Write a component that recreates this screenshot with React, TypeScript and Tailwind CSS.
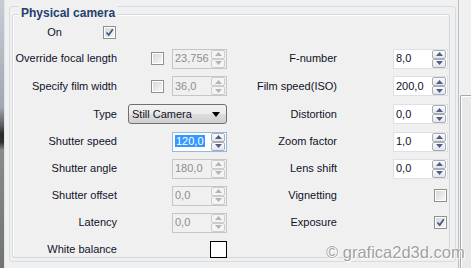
import React from "react";

const FONT = "font-['Liberation_Sans',Arial,sans-serif]";

function Tri({ up, color }: { up: boolean; color: string }) {
  return (
    <svg width="7" height="4" viewBox="0 0 7 4" className="block">
      {up ? (
        <polygon points="0,4 7,4 3.5,0" fill={color} />
      ) : (
        <polygon points="0,0 7,0 3.5,4" fill={color} />
      )}
    </svg>
  );
}

function SpinBtn({ up, disabled }: { up: boolean; disabled?: boolean }) {
  return (
    <div
      className={
        "h-[9px] w-[14px] flex items-center justify-center rounded-[2px] border " +
        (disabled
          ? "border-[#cdcdcd] bg-[#f4f4f4]"
          : "border-[#a9adb3] bg-[linear-gradient(to_bottom,#fcfcfc,#e3e6ea)]")
      }
    >
      <Tri up={up} color={disabled ? "#b4b4b4" : "#4d5f8a"} />
    </div>
  );
}

function Spin({
  value,
  disabled,
  selected,
}: {
  value: string;
  disabled?: boolean;
  selected?: boolean;
}) {
  return (
    <div
      className={
        "h-[20px] w-[55px] flex items-center border " +
        (disabled
          ? "border-[#c6c6c6] bg-[#f0f0f0]"
          : selected
          ? "border-[#8fbbe6] bg-white"
          : "border-[#dde1e6] bg-white")
      }
    >
      <div className="flex-1 overflow-hidden whitespace-nowrap pl-[2px] text-[11px] leading-[13px]">
        {selected ? (
          <span className="bg-[#3399ff] text-white px-[1px]">{value}</span>
        ) : (
          <span className={disabled ? "text-[#8e8e8e]" : "text-[#10102a]"}>{value}</span>
        )}
      </div>
      <div className="flex flex-col mr-[1px]">
        <SpinBtn up disabled={disabled} />
        <SpinBtn up={false} disabled={disabled} />
      </div>
    </div>
  );
}

function Check({ checked }: { checked?: boolean }) {
  return (
    <div className="h-[13px] w-[13px] border border-[#8e8f8f] bg-white p-[1px]">
      <div className="h-full w-full bg-[linear-gradient(135deg,#d8d8d8,#f6f6f6)] flex items-center justify-center">
        {checked && (
          <svg width="9" height="9" viewBox="0 0 9 9" className="block">
            <path d="M1.5 4.5 L3.7 7 L7.8 1.2" stroke="#45598a" strokeWidth="1.8" fill="none" />
          </svg>
        )}
      </div>
    </div>
  );
}

function Label({ text, w = "w-[104px]" }: { text: string; w?: string }) {
  return <div className={w + " text-right text-[11px] text-[#10102a] whitespace-nowrap"}>{text}</div>;
}

function Row({
  h,
  left,
  right,
}: {
  h: string;
  left: React.ReactNode;
  right?: React.ReactNode;
}) {
  return (
    <div className={h + " flex items-center"}>
      <div className="w-[214px] flex items-center">{left}</div>
      <div className="flex items-center">{right}</div>
    </div>
  );
}

export default function App() {
  return (
    <div className={"relative w-[471px] h-[268px] bg-[#f0f0f0] flex overflow-hidden " + FONT}>
      {/* left dark strip */}
      <div className="w-[4px] h-full bg-[linear-gradient(to_bottom,#c6cdd6_0%,#a0a7b0_40%,#55585c_47%,#2a2a2a_50%,#2e2e2e_53%,#8a8a8a_56%,#727272_100%)]" />
      <div className="w-[1px] h-full bg-[#e4e4e4]" />

      {/* content */}
      <div className="w-[453px] h-full pl-[4px] pt-[6px]">
        <div className="w-[447px] h-[256px] border border-[#d5dde4] rounded-[3px] pl-[2px] pt-[7px]">
          <div className="relative w-[438px] h-[244px] border border-[#d0d9e0] rounded-[3px] shadow-[inset_1px_1px_0_#ffffff]">
            <div className="absolute left-[6px] top-[-9px] px-[2px] bg-[#f0f0f0] text-[12px] font-bold text-[#24406e] leading-[15px]">
              Physical camera
            </div>
            <div className="pt-[4px]">
              <Row
                h="h-[26px]"
                left={
                  <>
                    <Label text="On" w="w-[49px]" />
                    <div className="ml-[41px]">
                      <Check checked />
                    </div>
                  </>
                }
              />
              <Row
                h="h-[27px]"
                left={
                  <>
                    <Label text="Override focal length" />
                    <div className="ml-[34px]">
                      <Check />
                    </div>
                    <div className="ml-[8px]">
                      <Spin value="23,756" disabled />
                    </div>
                  </>
                }
                right={
                  <>
                    <Label text="F-number" w="w-[110px]" />
                    <div className="ml-[56px]">
                      <Spin value="8,0" />
                    </div>
                  </>
                }
              />
              <Row
                h="h-[28px]"
                left={
                  <>
                    <Label text="Specify film width" />
                    <div className="ml-[34px]">
                      <Check />
                    </div>
                    <div className="ml-[8px]">
                      <Spin value="36,0" disabled />
                    </div>
                  </>
                }
                right={
                  <>
                    <Label text="Film speed(ISO)" w="w-[110px]" />
                    <div className="ml-[56px]">
                      <Spin value="200,0" />
                    </div>
                  </>
                }
              />
              <Row
                h="h-[28px]"
                left={
                  <>
                    <Label text="Type" />
                    <div className="ml-[11px] h-[20px] w-[99px] rounded-[3px] border border-[#707070] bg-[linear-gradient(to_bottom,#f2f2f2_0%,#ebebeb_50%,#dddddd_51%,#cfcfcf_100%)] flex items-center pl-[3px] pr-[6px]">
                      <span className="flex-1 text-[11px] text-[#10102a]">Still Camera</span>
                      <svg width="8" height="5" viewBox="0 0 8 5" className="block">
                        <polygon points="0,0 8,0 4,5" fill="#000" />
                      </svg>
                    </div>
                  </>
                }
                right={
                  <>
                    <Label text="Distortion" w="w-[110px]" />
                    <div className="ml-[56px]">
                      <Spin value="0,0" />
                    </div>
                  </>
                }
              />
              <Row
                h="h-[27px]"
                left={
                  <>
                    <Label text="Shutter speed" />
                    <div className="ml-[55px]">
                      <Spin value="120,0" selected />
                    </div>
                  </>
                }
                right={
                  <>
                    <Label text="Zoom factor" w="w-[110px]" />
                    <div className="ml-[56px]">
                      <Spin value="1,0" />
                    </div>
                  </>
                }
              />
              <Row
                h="h-[27px]"
                left={
                  <>
                    <Label text="Shutter angle" />
                    <div className="ml-[55px]">
                      <Spin value="180,0" disabled />
                    </div>
                  </>
                }
                right={
                  <>
                    <Label text="Lens shift" w="w-[110px]" />
                    <div className="ml-[56px]">
                      <Spin value="0,0" />
                    </div>
                  </>
                }
              />
              <Row
                h="h-[27px]"
                left={
                  <>
                    <Label text="Shutter offset" />
                    <div className="ml-[55px]">
                      <Spin value="0,0" disabled />
                    </div>
                  </>
                }
                right={
                  <>
                    <Label text="Vignetting" w="w-[110px]" />
                    <div className="ml-[97px]">
                      <Check />
                    </div>
                  </>
                }
              />
              <Row
                h="h-[27px]"
                left={
                  <>
                    <Label text="Latency" />
                    <div className="ml-[55px]">
                      <Spin value="0,0" disabled />
                    </div>
                  </>
                }
                right={
                  <>
                    <Label text="Exposure" w="w-[110px]" />
                    <div className="ml-[97px]">
                      <Check checked />
                    </div>
                  </>
                }
              />
              <Row
                h="h-[26px]"
                left={
                  <>
                    <Label text="White balance" />
                    <div className="ml-[93px] h-[17px] w-[17px] border border-black bg-white" />
                  </>
                }
              />
            </div>
          </div>
        </div>
      </div>

      {/* scrollbar */}
      <div className="w-[13px] h-full border-l border-[#bfbfbf] flex flex-col">
        <div className="h-[95px] bg-[#f0f0f0]" />
        <div className="flex-1 ml-[1px] border-l border-t border-[#a8a8a8] rounded-tl-[2px] bg-[#e9e9e9] shadow-[inset_1px_1px_0_#ffffff]" />
      </div>

      {/* watermark */}
      <div className="absolute left-[326px] top-[242px] text-[16.5px] leading-[20px] text-[#a0a0a0] whitespace-nowrap [text-shadow:0_0_1px_#ffffff,0_0_2px_#ffffff,1px_1px_0_#ffffff]">
        © grafica2d3d.com
      </div>
    </div>
  );
}
